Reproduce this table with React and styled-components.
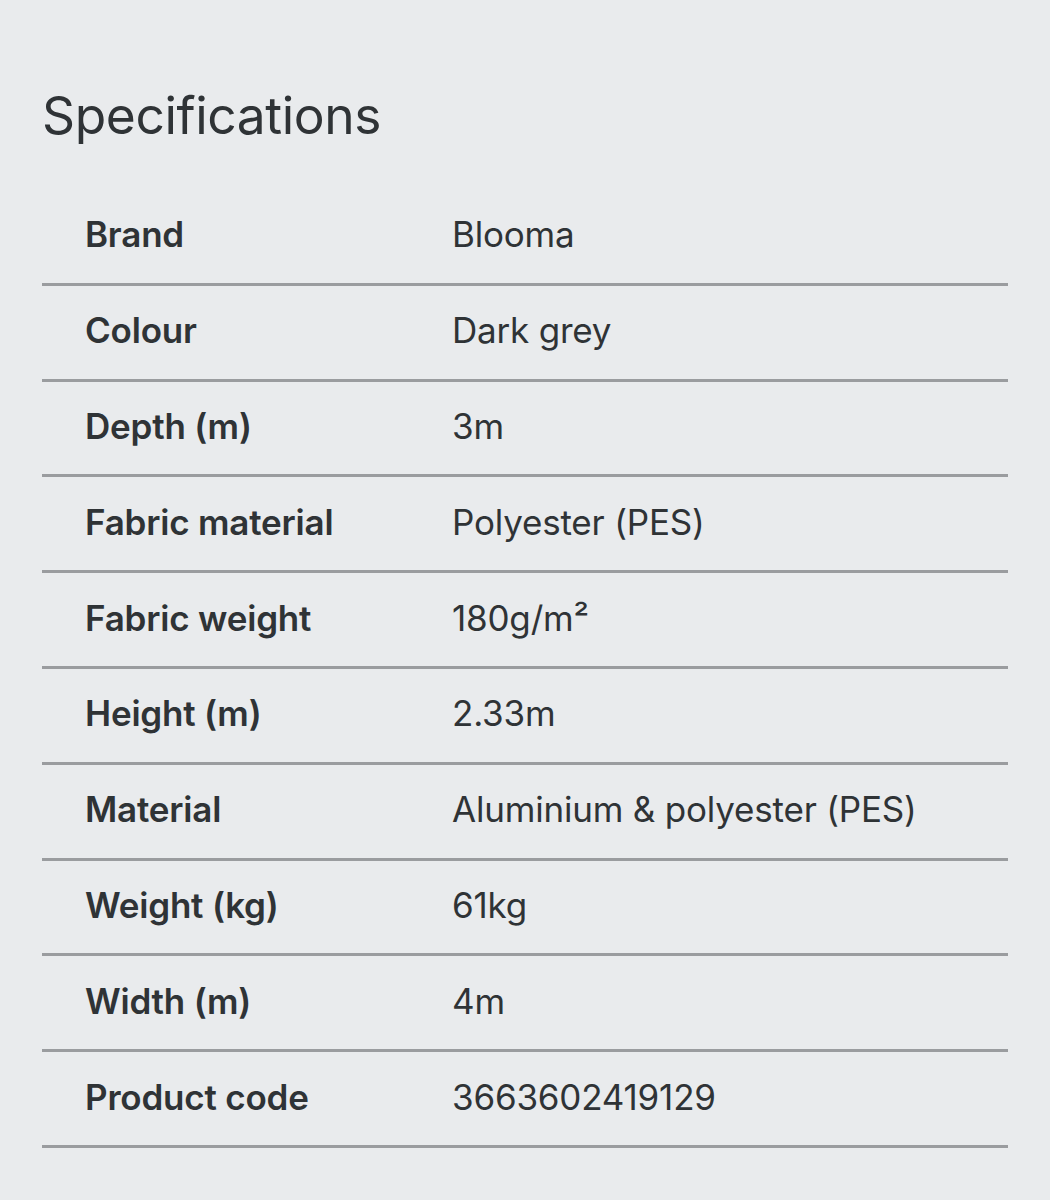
import React from 'react';
import styled, { createGlobalStyle } from 'styled-components';

const GlobalStyle = createGlobalStyle`
  html, body {
    margin: 0;
    padding: 0;
    background: #e9ebed;
  }
  body {
    font-family: Inter, "Noto Sans", sans-serif;
    color: #2f3336;
  }
`;

const Page = styled.div`
  width: 1050px;
  height: 1200px;
  box-sizing: border-box;
  padding: 84px 42px 0 42px;
  background: #e9ebed;
`;

const Title = styled.h2`
  margin: 0;
  font-size: 51.5px;
  font-weight: 400;
  line-height: 62px;
  letter-spacing: -0.4px;
  color: #2f3336;
`;

const Table = styled.div`
  margin-top: 44px;
  width: 966px;
`;

const Row = styled.div`
  display: grid;
  grid-template-columns: 410px 1fr;
  align-items: center;
  height: 95.8px;
  box-sizing: border-box;
  padding-bottom: 4px;
  border-bottom: 3px solid #9a9c9f;
`;

const Label = styled.div`
  padding-left: 43px;
  font-size: 35px;
  font-weight: 600;
  letter-spacing: -0.2px;
  color: #2f3336;
`;

const Value = styled.div`
  font-size: 35px;
  font-weight: 400;
  letter-spacing: -0.2px;
  color: #2f3336;
`;

const specs = [
  ['Brand', 'Blooma'],
  ['Colour', 'Dark grey'],
  ['Depth (m)', '3m'],
  ['Fabric material', 'Polyester (PES)'],
  ['Fabric weight', '180g/m²'],
  ['Height (m)', '2.33m'],
  ['Material', 'Aluminium & polyester (PES)'],
  ['Weight (kg)', '61kg'],
  ['Width (m)', '4m'],
  ['Product code', '3663602419129'],
];

export default function App() {
  return (
    <Page>
      <GlobalStyle />
      <Title>Specifications</Title>
      <Table>
        {specs.map(([label, value]) => (
          <Row key={label}>
            <Label>{label}</Label>
            <Value>{value}</Value>
          </Row>
        ))}
      </Table>
    </Page>
  );
}
